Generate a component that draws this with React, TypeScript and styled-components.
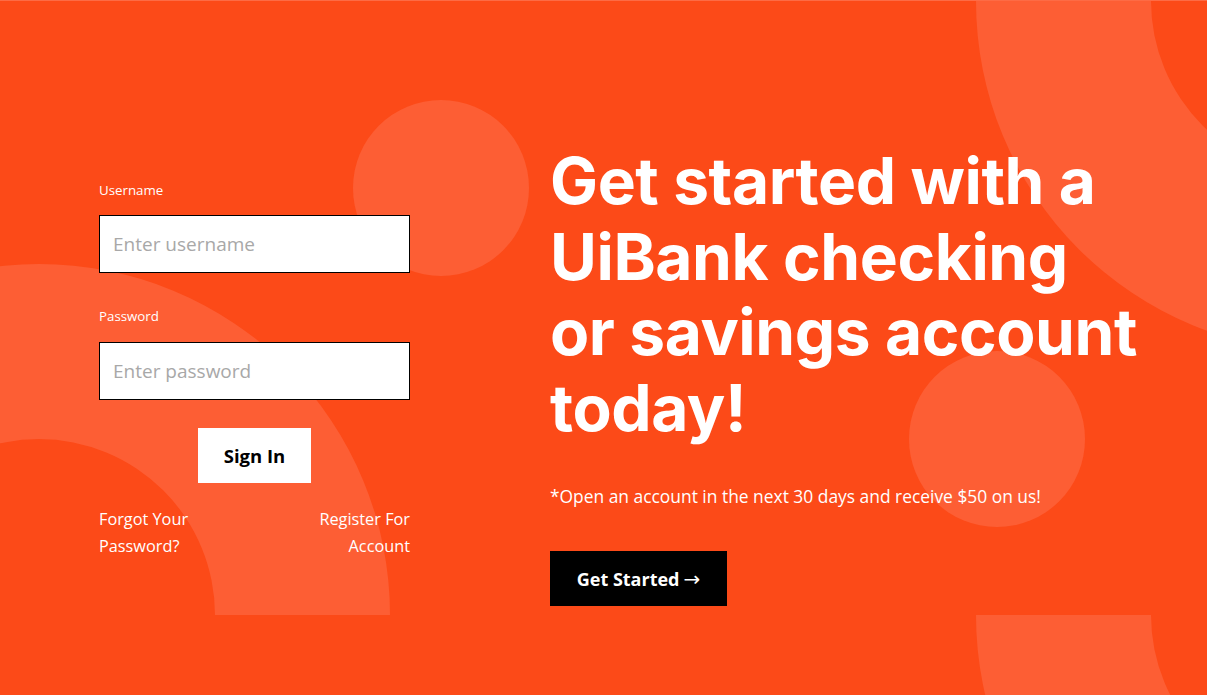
import React from "react";
import styled, { createGlobalStyle } from "styled-components";

const GlobalStyle = createGlobalStyle`
  html, body { margin: 0; padding: 0; }
  body { font-family: "Open Sans", "Noto Sans", sans-serif; background: #fc4a18; }
  * { box-sizing: border-box; }
`;

const Page = styled.div`
  position: relative;
  width: 1207px;
  height: 695px;
  overflow: hidden;
  background: #fc4a18;
  border-top: 1px solid #fd6b45;
  display: flex;
  align-items: flex-start;
  padding: 142px 0 0 99px;
`;

const Decor = styled.svg`
  position: absolute;
  left: 0;
  top: 0;
  width: 1207px;
  height: 695px;
  z-index: 0;
`;

const FormColumn = styled.form`
  position: relative;
  z-index: 1;
  width: 311px;
  margin-top: 37px;
  display: flex;
  flex-direction: column;
`;

const Label = styled.label<{ $gap: number }>`
  color: #fff;
  font-family: "Open Sans", sans-serif;
  font-size: 13.3px;
  font-weight: 500;
  line-height: 20px;
  margin-bottom: ${(p) => p.$gap}px;
`;

const Input = styled.input<{ $gap: number }>`
  width: 100%;
  height: 58px;
  border: 1px solid #000;
  background: #fff;
  padding: 0 13px;
  font-family: "Open Sans", sans-serif;
  font-size: 19px;
  color: #222;
  outline: none;
  margin-bottom: ${(p) => p.$gap}px;
  &::placeholder { color: #a8a8a8; }
`;

const SignInButton = styled.button`
  align-self: center;
  width: 113px;
  height: 55px;
  border: none;
  background: #fff;
  color: #000;
  font-family: "Open Sans", sans-serif;
  font-weight: 700;
  font-size: 18.5px;
  cursor: pointer;
`;

const LinksRow = styled.div`
  display: flex;
  justify-content: space-between;
  margin-top: 23px;
`;

const TextLink = styled.a<{ $align: "left" | "right" }>`
  color: #fff;
  text-decoration: none;
  font-family: "Open Sans", sans-serif;
  font-size: 16.3px;
  line-height: 27px;
  text-align: ${(p) => p.$align};
`;

const Hero = styled.section`
  position: relative;
  z-index: 1;
  margin-left: 140px;
  display: flex;
  flex-direction: column;
  align-items: flex-start;
`;

const Heading = styled.h1`
  margin: 0;
  color: #fff;
  font-family: "Inter", sans-serif;
  font-weight: 700;
  font-size: 64px;
  line-height: 75.6px;
  letter-spacing: -0.4px;
  white-space: nowrap;
`;

const Note = styled.p`
  margin: 39px 0 0;
  color: #fff;
  font-family: "Open Sans", sans-serif;
  font-size: 17.4px;
  line-height: 24px;
`;

const StartButton = styled.button`
  margin-top: 43px;
  width: 177px;
  height: 55px;
  border: none;
  background: #000;
  color: #fff;
  font-family: "Open Sans", sans-serif;
  font-weight: 700;
  font-size: 18px;
  cursor: pointer;
  display: flex;
  align-items: center;
  justify-content: center;
  gap: 4px;
`;

const Arrow = styled.span`
  font-family: "DejaVu Sans", sans-serif;
  font-weight: 400;
  font-size: 20px;
  line-height: 1;
`;

const SHAPE = "#fd5e34";

export default function App() {
  return (
    <>
      <GlobalStyle />
      <Page>
        <Decor viewBox="0 0 1207 695" aria-hidden>
          <circle cx="441" cy="187" r="88" fill={SHAPE} />
          <circle cx="997" cy="438" r="88" fill={SHAPE} />
          <path d="M -312 614 A 351 351 0 0 1 390 614 L 215 614 A 176 176 0 0 0 -137 614 Z" fill={SHAPE} />
          <path d="M 976 0 A 351 351 0 0 0 1678 0 L 1503 0 A 176 176 0 0 1 1151 0 Z" fill={SHAPE} />
          <path d="M 976 614 A 351 351 0 0 0 1678 614 L 1503 614 A 176 176 0 0 1 1151 614 Z" fill={SHAPE} />
        </Decor>
        <FormColumn onSubmit={(e) => e.preventDefault()}>
          <Label htmlFor="username" $gap={15}>Username</Label>
          <Input id="username" placeholder="Enter username" $gap={33} />
          <Label htmlFor="password" $gap={16}>Password</Label>
          <Input id="password" type="password" placeholder="Enter password" $gap={28} />
          <SignInButton type="submit">Sign In</SignInButton>
          <LinksRow>
            <TextLink href="#" $align="left">Forgot Your<br />Password?</TextLink>
            <TextLink href="#" $align="right">Register For<br />Account</TextLink>
          </LinksRow>
        </FormColumn>
        <Hero>
          <Heading>
            Get started with a<br />
            UiBank checking<br />
            or savings account<br />
            today!
          </Heading>
          <Note>*Open an account in the next 30 days and receive $50 on us!</Note>
          <StartButton>Get Started<Arrow>→</Arrow></StartButton>
        </Hero>
      </Page>
    </>
  );
}
